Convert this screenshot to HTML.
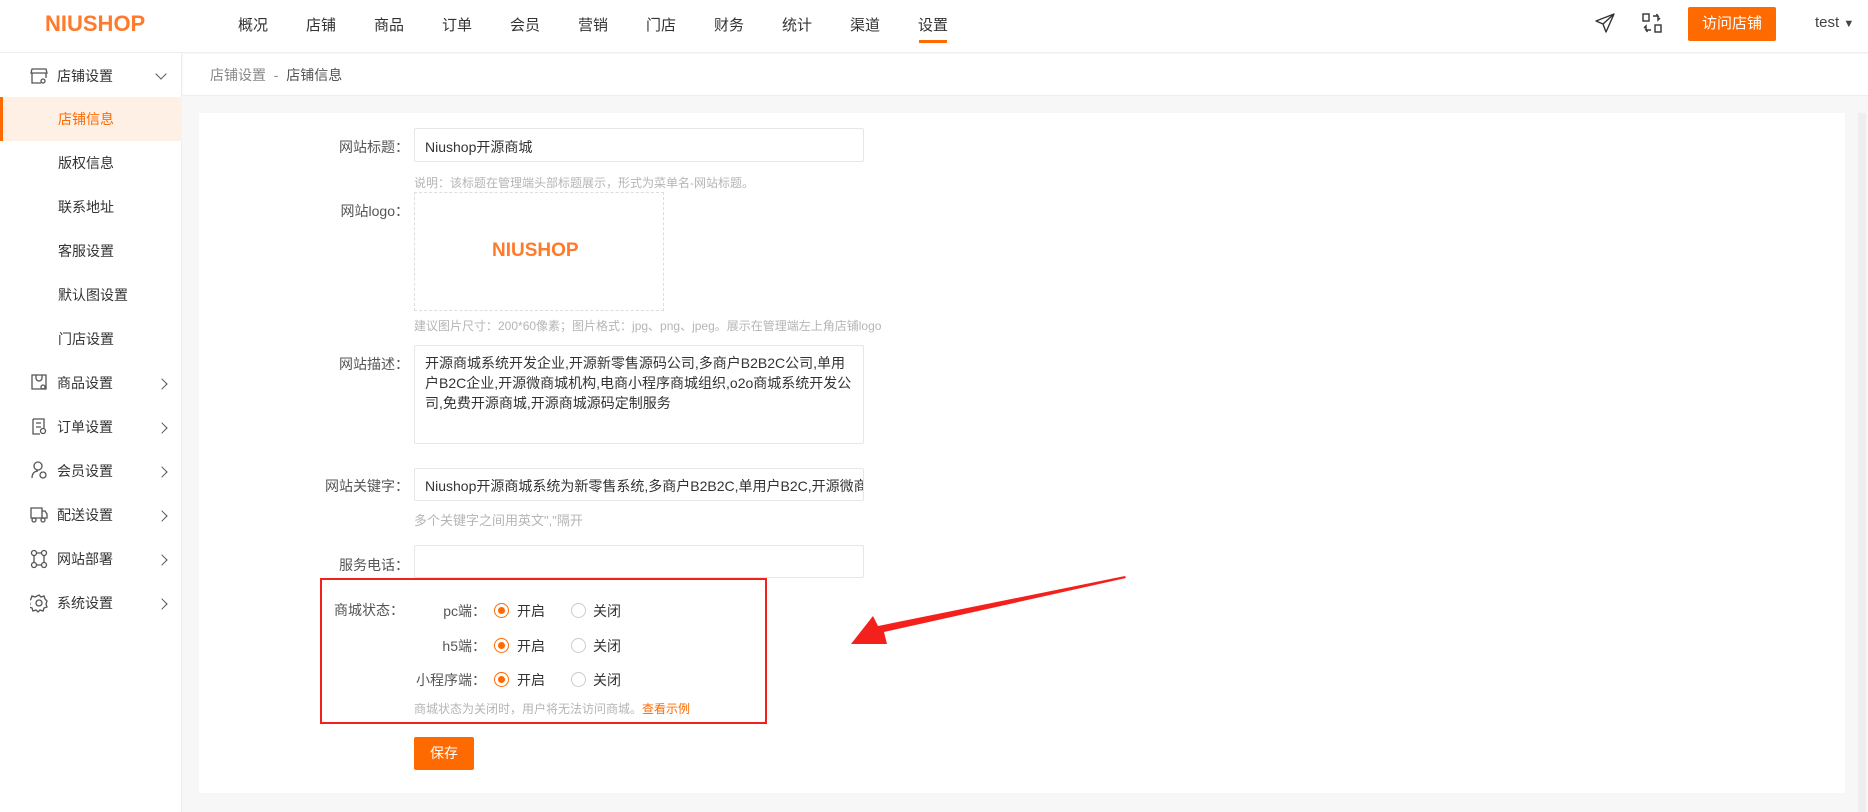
<!DOCTYPE html>
<html><head><meta charset="utf-8"><style>
*{margin:0;padding:0;box-sizing:border-box}
body{width:1868px;height:812px;overflow:hidden;background:#f7f7f7;font-family:"Liberation Sans","Noto Sans CJK SC",sans-serif;color:#333;position:relative;font-size:14px}
.a{position:absolute;white-space:nowrap}
.hdr{left:0;top:0;width:1868px;height:53px;background:#fff;border-bottom:1px solid #eee}
.logo{color:#ff7a2a;font-weight:bold;font-size:22px;letter-spacing:0px}
.nav{font-size:15px;color:#333;top:14px;width:60px;text-align:center}
.side{left:0;top:53px;width:182px;height:759px;background:#fff;border-right:1px solid #eee}
.si{font-size:14px;color:#333;line-height:20px}
.chev{width:8px;height:8px;border-right:1.3px solid #555;border-top:1.3px solid #555;transform:rotate(45deg)}
.lbl{font-size:14px;color:#555;text-align:right;width:200px}
.inp{background:#fff;border:1px solid #e6e6e6;border-radius:2px}
.help{font-size:12px;color:#b5b5b5}
.rad{width:15px;height:15px;border-radius:50%;border:1px solid #ccc;background:#fff}
.rad.on{border-color:#ff6a00}
.rad.on:after{content:"";position:absolute;left:3px;top:3px;width:7px;height:7px;border-radius:50%;background:#ff6a00}
</style></head><body>
<div class="a hdr"></div>
<div class="a logo" style="left:45px;top:11px">NIUSHOP</div>
<div class="a nav" style="left:223px">概况</div>
<div class="a nav" style="left:291px">店铺</div>
<div class="a nav" style="left:359px">商品</div>
<div class="a nav" style="left:427px">订单</div>
<div class="a nav" style="left:495px">会员</div>
<div class="a nav" style="left:563px">营销</div>
<div class="a nav" style="left:631px">门店</div>
<div class="a nav" style="left:699px">财务</div>
<div class="a nav" style="left:767px">统计</div>
<div class="a nav" style="left:835px">渠道</div>
<div class="a nav" style="left:903px">设置</div>
<div class="a" style="left:919px;top:40px;width:28px;height:3px;background:#ff6a00"></div>
<svg class="a" style="left:1594px;top:12px" width="22" height="22" viewBox="0 0 22 22" fill="none" stroke="#333" stroke-width="1.4" stroke-linejoin="round"><path d="M20 2L2 9l7 3 3 8z M9 12L20 2"/></svg>
<svg class="a" style="left:1641px;top:12px" width="22" height="22" viewBox="0 0 22 22" fill="none" stroke="#333" stroke-width="1.4"><rect x="2" y="2" width="6" height="7"/><rect x="14" y="13" width="6" height="7"/><path d="M12 4h5l-1.5-2M17 4v4l2-2M10 18H5l1.5 2M5 18v-4l-2 2"/></svg>
<div class="a" style="left:1688px;top:7px;width:88px;height:34px;background:#ff6a00;border-radius:2px;color:#fff;font-size:15px;text-align:center;line-height:34px">访问店铺</div>
<div class="a" style="left:1815px;top:14px;font-size:15px;color:#444">test <span style="font-size:11px">▼</span></div>

<div class="a side"></div>
<svg class="a" style="left:30px;top:67px" width="18" height="18" viewBox="0 0 18 18" fill="none" stroke="#555" stroke-width="1.3"><path d="M2 2h14l1 4H1z M2 6v10h9 M16 6v5"/><circle cx="13" cy="14" r="2"/></svg>
<div class="a si" style="left:57px;top:66px">店铺设置</div>
<div class="a chev" style="left:157px;top:70px;transform:rotate(135deg)"></div>
<div class="a" style="left:0;top:97px;width:182px;height:44px;background:#fff0e6;border-left:3px solid #ff6a00"></div>
<div class="a si" style="left:58px;top:109px;color:#ff6a00">店铺信息</div>
<div class="a si" style="left:58px;top:153px">版权信息</div>
<div class="a si" style="left:58px;top:197px">联系地址</div>
<div class="a si" style="left:58px;top:241px">客服设置</div>
<div class="a si" style="left:58px;top:285px">默认图设置</div>
<div class="a si" style="left:58px;top:329px">门店设置</div>
<div class="a si" style="left:57px;top:373px">商品设置</div>
<div class="a si" style="left:57px;top:417px">订单设置</div>
<div class="a si" style="left:57px;top:461px">会员设置</div>
<div class="a si" style="left:57px;top:505px">配送设置</div>
<div class="a si" style="left:57px;top:549px">网站部署</div>
<div class="a si" style="left:57px;top:593px">系统设置</div>
<svg class="a" style="left:30px;top:373px" width="18" height="240" viewBox="0 0 18 240" fill="none" stroke="#555" stroke-width="1.3">
<path d="M2 2h14v14H2z M6 2v3a3 3 0 0 0 6 0V2"/><circle cx="13" cy="14" r="2"/>
<path d="M3 46h11v9 M3 46v15h7 M6 50h5 M6 54h5"/><circle cx="13" cy="58" r="2.5"/>
<circle cx="8" cy="93" r="4"/><path d="M2 105c0-5 3-7 6-7"/><circle cx="13" cy="102" r="3"/>
<path d="M1 135h11v10H1z M12 138h3l2 3v4h-5"/><circle cx="4" cy="147" r="2"/><circle cx="13" cy="147" r="2"/>
<circle cx="4" cy="180" r="2.5"/><circle cx="14" cy="180" r="2.5"/><circle cx="4" cy="192" r="2.5"/><circle cx="14" cy="192" r="2.5"/><path d="M4 183v7 M14 183v7 M7 180h4 M7 192h4"/>
<circle cx="9" cy="230" r="3"/><path d="M9 222l2 2 3-1 1 3 2 2-1 3 1 3-3 1-1 3-3-1-2 2-2-2-3 1-1-3-3-1 1-3-1-3 2-2 1-3 3 1z"/>
</svg>
<div class="a chev" style="left:158px;top:380px;transform:rotate(45deg)"></div>
<div class="a chev" style="left:158px;top:424px"></div>
<div class="a chev" style="left:158px;top:468px"></div>
<div class="a chev" style="left:158px;top:512px"></div>
<div class="a chev" style="left:158px;top:556px"></div>
<div class="a chev" style="left:158px;top:600px"></div>

<div class="a" style="left:183px;top:54px;width:1685px;height:42px;background:#fff;border-bottom:1px solid #eee"></div>
<div class="a" style="left:210px;top:65px;font-size:14px;color:#888">店铺设置 &nbsp;- &nbsp;<span style="color:#555">店铺信息</span></div>
<div class="a" style="left:199px;top:113px;width:1646px;height:680px;background:#fff"></div>
<div class="a" style="left:1858px;top:113px;width:8px;height:699px;background:#eee"></div>

<div class="a lbl" style="left:209px;top:137px">网站标题：</div>
<div class="a inp" style="left:414px;top:128px;width:450px;height:34px"></div>
<div class="a" style="left:425px;top:137px;color:#333">Niushop开源商城</div>
<div class="a help" style="left:414px;top:174px">说明：该标题在管理端头部标题展示，形式为菜单名-网站标题。</div>
<div class="a lbl" style="left:209px;top:201px">网站logo：</div>
<div class="a" style="left:414px;top:192px;width:250px;height:119px;border:1px dashed #ddd"></div>
<div class="a logo" style="left:492px;top:240px;font-size:19px">NIUSHOP</div>
<div class="a help" style="left:414px;top:317px">建议图片尺寸：200*60像素；图片格式：jpg、png、jpeg。展示在管理端左上角店铺logo</div>
<div class="a lbl" style="left:209px;top:354px">网站描述：</div>
<div class="a inp" style="left:414px;top:345px;width:450px;height:99px"></div>
<div class="a" style="left:425px;top:353px;width:432px;white-space:normal;line-height:20px;color:#333">开源商城系统开发企业,开源新零售源码公司,多商户B2B2C公司,单用户B2C企业,开源微商城机构,电商小程序商城组织,o2o商城系统开发公司,免费开源商城,开源商城源码定制服务</div>
<div class="a lbl" style="left:209px;top:476px">网站关键字：</div>
<div class="a inp" style="left:414px;top:468px;width:450px;height:33px;overflow:hidden"><div style="padding:7px 10px;white-space:nowrap">Niushop开源商城系统为新零售系统,多商户B2B2C,单用户B2C,开源微商城</div></div>
<div class="a help" style="left:414px;top:510px;font-size:13px">多个关键字之间用英文","隔开</div>
<div class="a lbl" style="left:209px;top:555px">服务电话：</div>
<div class="a inp" style="left:414px;top:545px;width:450px;height:33px"></div>

<div class="a" style="left:320px;top:578px;width:447px;height:146px;border:2px solid #f4201c"></div>
<div class="a" style="left:334px;top:600px;color:#555">商城状态：</div>
<div class="a" style="left:386px;top:601px;width:100px;text-align:right;color:#555">pc端：</div>
<div class="a" style="left:386px;top:636px;width:100px;text-align:right;color:#555">h5端：</div>
<div class="a" style="left:386px;top:670px;width:100px;text-align:right;color:#555">小程序端：</div>
<div class="a rad on" style="left:494px;top:603px"></div><div class="a" style="left:517px;top:601px">开启</div>
<div class="a rad" style="left:571px;top:603px"></div><div class="a" style="left:593px;top:601px">关闭</div>
<div class="a rad on" style="left:494px;top:638px"></div><div class="a" style="left:517px;top:636px">开启</div>
<div class="a rad" style="left:571px;top:638px"></div><div class="a" style="left:593px;top:636px">关闭</div>
<div class="a rad on" style="left:494px;top:672px"></div><div class="a" style="left:517px;top:670px">开启</div>
<div class="a rad" style="left:571px;top:672px"></div><div class="a" style="left:593px;top:670px">关闭</div>
<div class="a help" style="left:414px;top:700px">商城状态为关闭时，用户将无法访问商城。<span style="color:#ff6a00">查看示例</span></div>
<div class="a" style="left:414px;top:737px;width:60px;height:33px;background:#ff6a00;border-radius:2px;color:#fff;text-align:center;line-height:33px;font-size:14px">保存</div>

<svg class="a" style="left:840px;top:570px" width="295" height="85" viewBox="0 0 295 85"><polygon points="285,6 286,8 44,62 47,74 11,74 33,46 38,56" fill="#f4201c"/></svg>
</body></html>
